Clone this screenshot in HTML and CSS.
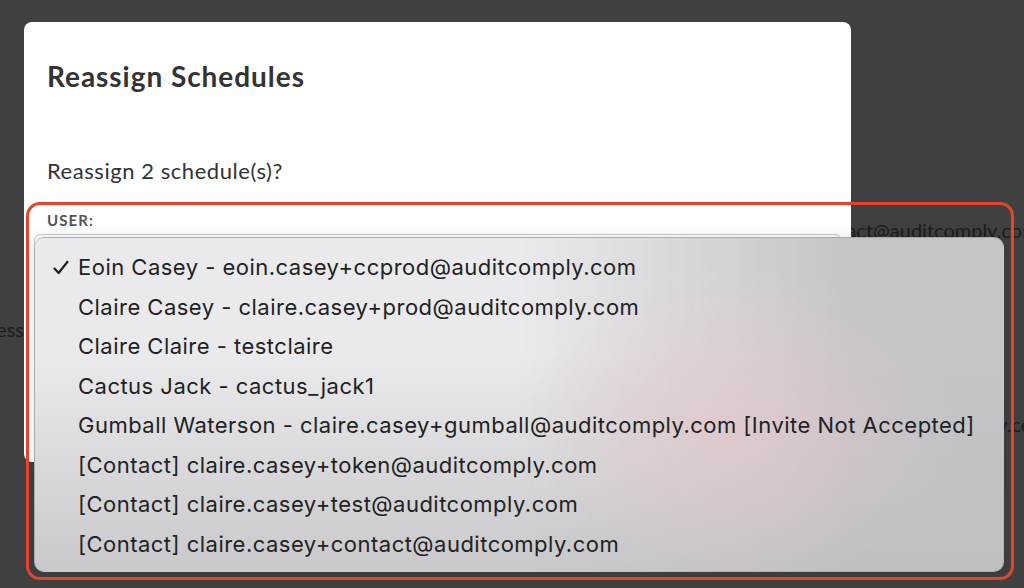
FILE: index.html
```html
<!DOCTYPE html>
<html lang="en">
<head>
    <meta charset="UTF-8">
    <title>Reassign Schedules</title>
    <link rel="stylesheet" href="styles.css">
</head>
<body>
<div class="page">
    <div class="bg-row row-1">
        <div class="bg-left"></div>
        <div class="bg-right">claire.casey+contact@auditcomply.com</div>
    </div>
    <div class="bg-row row-2">
        <div class="bg-left">Address</div>
    </div>
    <div class="bg-row row-3">
        <div class="bg-left">Address</div>
        <div class="bg-right far">claire.casey+gumball@auditcomply.com</div>
    </div>
</div>

<div class="modal">
    <h2 class="modal-title">Reassign Schedules</h2>
    <p class="modal-text">Reassign 2 schedule(s)?</p>
    <label class="field-label">User:</label>
    <div class="select-box"></div>
</div>

<ul class="menu">
    <li class="selected">
        <svg class="check" width="16" height="16" viewBox="0 0 16 16">
            <path d="M1.5 8.6 L5.6 13 L14.5 1.8" fill="none" stroke="#1f1f1f" stroke-width="2.2" stroke-linecap="round" stroke-linejoin="round"/>
        </svg>
        Eoin Casey - eoin.casey+ccprod@auditcomply.com
    </li>
    <li>Claire Casey - claire.casey+prod@auditcomply.com</li>
    <li>Claire Claire - testclaire</li>
    <li>Cactus Jack - cactus_jack1</li>
    <li>Gumball Waterson - claire.casey+gumball@auditcomply.com [Invite Not Accepted]</li>
    <li>[Contact] claire.casey+token@auditcomply.com</li>
    <li>[Contact] claire.casey+test@auditcomply.com</li>
    <li>[Contact] claire.casey+contact@auditcomply.com</li>
</ul>

<div class="highlight"></div>
</body>
</html>
```

FILE: styles.css
```css
body {
    margin: 0;
    background-color: #404040;
    font-family: Lato, sans-serif;
    width: 1024px;
    height: 588px;
    overflow: hidden;
    position: relative;
}

/* table rows behind the overlay */
.page {
    padding-top: 215px;
    color: #1c1c1c;
    font-size: 20px;
}

.bg-row {
    display: flex;
    height: 97px;
    line-height: 30px;
}

.row-2 {
    padding-top: 2px;
    height: 95px;
}

.bg-left {
    width: 24px;
    display: flex;
    justify-content: flex-end;
    overflow: hidden;
    white-space: nowrap;
}

.bg-right {
    margin-left: 696px;
    white-space: nowrap;
}

.bg-right.far {
    margin-left: 703px;
}

.modal {
    position: absolute;
    left: 24px;
    top: 22px;
    width: 827px;
    height: 440px;
    box-sizing: border-box;
    padding: 0 23px;
    background-color: #ffffff;
    border-radius: 8px;
    color: #333333;
}

.modal-title {
    margin: 37px 0 0;
    font-size: 28px;
    font-weight: bold;
    letter-spacing: 0.95px;
    line-height: 34px;
}

.modal-text {
    margin: 64px 0 0;
    font-size: 22px;
    letter-spacing: 0.55px;
    line-height: 28px;
}

.field-label {
    display: block;
    margin-top: 26px;
    font-size: 15px;
    font-weight: bold;
    letter-spacing: 1.1px;
    text-transform: uppercase;
    color: #555555;
    line-height: 18px;
}

.select-box {
    margin: 5px -13px 0;
    height: 40px;
    border: 1px solid #c9ccd1;
    border-radius: 6px;
}

.menu {
    position: absolute;
    left: 34px;
    top: 237px;
    width: 970px;
    height: 335px;
    box-sizing: border-box;
    margin: 0;
    padding: 10px 0 0;
    list-style: none;
    border-radius: 10px;
    border: 1px solid rgba(0, 0, 0, 0.12);
    box-shadow: 0 0 14px rgba(0, 0, 0, 0.12);
    background:
        radial-gradient(ellipse 220px 160px at 700px 190px, rgba(234, 200, 204, 0.6), rgba(234, 200, 204, 0) 100%),
        linear-gradient(to right, rgba(190, 190, 194, 0) 50%, rgba(190, 190, 194, 0.85) 84%),
        linear-gradient(to bottom, #eaeaec 35%, #c9c9cb 100%);
    font-family: Inter, "Noto Sans", sans-serif;
    font-size: 22px;
    letter-spacing: 0.48px;
    color: #222222;
}

.menu li {
    position: relative;
    height: 39.5px;
    line-height: 39.5px;
    padding-left: 43px;
    white-space: nowrap;
}

.check {
    position: absolute;
    left: 18px;
    top: 12px;
}

.highlight {
    position: absolute;
    left: 26px;
    top: 202px;
    width: 988px;
    height: 378px;
    box-sizing: border-box;
    border: 3px solid #e8442b;
    border-radius: 14px;
}
```
